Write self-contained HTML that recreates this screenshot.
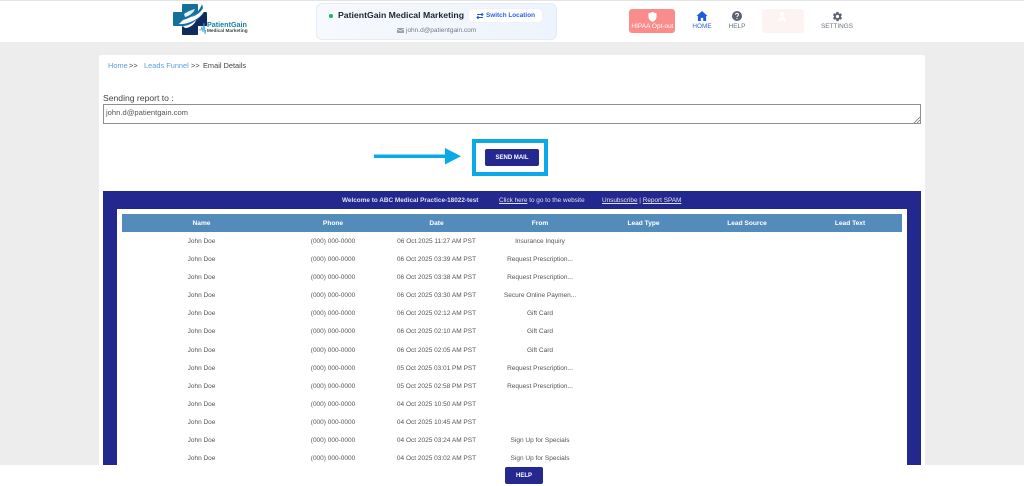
<!DOCTYPE html>
<html><head><meta charset="utf-8"><style>
*{box-sizing:border-box}
html,body{margin:0;padding:0}
body{width:1024px;height:486px;overflow:hidden;position:relative;background:#ededed;font-family:"Liberation Sans",Arial,sans-serif;color:#444}
.a{position:absolute;white-space:nowrap}
.c{transform:translateX(-50%)}
.cell{position:absolute;transform:translateX(-50%);font-size:6.5px;line-height:10px;margin-top:1px;color:#555;white-space:nowrap}
.th{position:absolute;transform:translateX(-50%);font-size:6.6px;line-height:10px;font-weight:bold;color:#fff;white-space:nowrap;top:219px}
</style></head><body>
<div class="a" style="left:0;top:0;width:1024px;height:42px;background:#fff;border-top:1px solid #e4e4e4"></div>

<svg class="a" style="left:170px;top:1px" width="82" height="38" viewBox="0 0 82 38">
<defs><clipPath id="cr"><path d="M12 4Q12 3 13 3H27Q28 3 28 4V11H36Q37 11 37 12V24Q37 25 36 25H28V33Q28 34 27 34H13Q12 34 12 33V25H4Q3 25 3 24V12Q3 11 4 11H12Z"/></clipPath></defs>
<g clip-path="url(#cr)">
<rect width="40" height="38" fill="#15709c"/>
<path d="M36 8 40 38H2L5 27C16 28 30 20 36 8Z" fill="#102a5e"/>
</g>
<path d="M33 2C31 9 24 16 13 19L9 23C19 24 33 16 35 8Z" fill="#fff"/>
<path d="M32 3C30 9 26 13 21 16 26 15 31 11 33 7Z" fill="#0f6f9e"/>
<path d="M14 13C18 10 22 9 25 8 24 11 20 15 15 16Z" fill="#dff0f6"/>
<path d="M13 25C18 25 23 22 26 19 25 23 20 27 15 27Z" fill="#fff"/>
<path d="M29 29h2l1-3 1 5 1-9 1 11 .7-4" stroke="#3ba3c8" stroke-width=".8" fill="none"/>
</svg>
<div class="a" style="left:207px;top:20px;font-size:7.200px;line-height:10px;font-weight:bold;color:#1583ab">PatientGain</div>
<div class="a" style="left:207px;top:28px;font-size:4.700px;line-height:6px;font-weight:bold;color:#444">Medical Marketing</div>

<div class="a" style="left:316px;top:3px;width:241px;height:37px;background:linear-gradient(90deg,#f6f9fd,#eef4fd);border:1px solid #e6ecf5;border-radius:6px"></div>
<div class="a" style="left:329px;top:14px;width:4px;height:4px;border-radius:50%;background:#17b85c"></div>
<div class="a" style="left:338px;top:10px;font-size:8.700px;line-height:11px;font-weight:bold;color:#1d2433">PatientGain Medical Marketing</div>
<div class="a" style="left:468px;top:8px;width:75px;height:15px;background:#fff;border:1px solid #eef1f7;border-radius:5px"></div>
<svg class="a" style="left:476px;top:12px" width="8" height="8" viewBox="0 0 8 8"><path d="M1 2.500h6M5.500 1 7 2.500 5.500 4M7 5.500H1M2.500 4 1 5.500 2.500 7" stroke="#2457e6" stroke-width="1" fill="none"/></svg>
<div class="a" style="left:486px;top:11px;font-size:6.400px;line-height:9px;font-weight:bold;color:#2f5fe0">Switch Location</div>
<svg class="a" style="left:397px;top:28px" width="7" height="5" viewBox="0 0 7 5"><rect width="7" height="5" rx=".6" fill="#9ba1ab"/><path d="M0 1l3.500 2L7 1" stroke="#fff" stroke-width=".6" fill="none"/></svg>
<div class="a" style="left:406px;top:26px;font-size:6.500px;line-height:9px;color:#737a86">john.d@patientgain.com</div>

<div class="a" style="left:629px;top:9px;width:46px;height:24px;background:#fa8c8c;border-radius:3px"></div>
<svg class="a" style="left:647.500px;top:11.500px" width="9" height="10" viewBox="0 0 10 11"><path d="M5 0 9.500 1.500V5c0 3-2 5-4.500 6C2.500 10 .5 8 .5 5V1.500z" fill="#fff"/></svg>
<div class="a c" style="left:652.500px;top:22px;font-size:6.500px;line-height:9px;color:#fff">HIPAA Opt-out</div>

<svg class="a" style="left:696px;top:11px" width="12" height="10" viewBox="0 0 12 11"><path d="M6 0 12 5.500H10.500V11H7.300V7.500H4.700V11H1.500V5.500H0z" fill="#1d5be0"/></svg>
<div class="a c" style="left:702px;top:23px;font-size:6.400px;line-height:8px;color:#2f63e0">HOME</div>

<svg class="a" style="left:732px;top:11px" width="10" height="10" viewBox="0 0 10 10"><circle cx="5" cy="5" r="5" fill="#596172"/><path d="M3.500 3.800C3.500 2.900 4.200 2.400 5 2.400s1.500.5 1.500 1.300C6.500 4.800 5 4.800 5 6" stroke="#fff" stroke-width="1" fill="none"/><circle cx="5" cy="7.500" r=".6" fill="#fff"/></svg>
<div class="a c" style="left:737px;top:23px;font-size:6.400px;line-height:8px;color:#6a7280">HELP</div>

<div class="a" style="left:762px;top:9px;width:42px;height:24px;background:#fef3f3;border-radius:3px"></div>
<svg class="a" style="left:777px;top:11px" width="12" height="10" viewBox="0 0 12 10"><circle cx="5" cy="3" r="2.400" fill="#fff"/><path d="M1 10c0-3 2-4 4-4s4 1 4 4z" fill="#fff"/></svg>

<svg class="a" style="left:832px;top:10.500px" width="11" height="11" viewBox="0 0 24 24"><path fill="#596172" d="M19.400 13c.1-.3.100-.7.100-1s0-.7-.1-1l2.100-1.600c.2-.2.200-.4.100-.6l-2-3.500c-.1-.2-.4-.3-.6-.2l-2.500 1c-.5-.4-1.100-.7-1.700-1l-.4-2.600c0-.3-.2-.5-.5-.5h-4c-.3 0-.5.200-.5.500l-.4 2.600c-.6.300-1.200.6-1.700 1l-2.500-1c-.2-.1-.5 0-.6.200l-2 3.500c-.1.200-.1.400.1.600L4.600 11c-.1.300-.1.700-.1 1s0 .7.100 1l-2.100 1.600c-.2.200-.2.400-.1.600l2 3.500c.1.200.4.300.6.200l2.500-1c.5.400 1.100.7 1.700 1l.4 2.600c0 .3.200.5.500.5h4c.3 0 .5-.2.500-.5l.4-2.600c.6-.3 1.200-.6 1.700-1l2.500 1c.2.100.5 0 .6-.2l2-3.500c.1-.2.100-.4-.1-.6zM12 15.500a3.500 3.500 0 1 1 0-7 3.500 3.500 0 0 1 0 7z"/></svg>
<div class="a c" style="left:837px;top:23px;font-size:6.400px;line-height:8px;color:#6a7280">SETTINGS</div>

<div class="a" style="left:99px;top:55px;width:826px;height:420px;background:#fff;border-radius:3px"></div>
<div class="a" style="left:108px;top:60px;font-size:7.400px;line-height:11px;color:#5a9fe0">Home</div>
<div class="a" style="left:129px;top:60px;font-size:7.400px;line-height:11px;color:#444">&gt;&gt;</div>
<div class="a" style="left:144px;top:60px;font-size:7.400px;line-height:11px;color:#5a9fe0">Leads Funnel</div>
<div class="a" style="left:191px;top:60px;font-size:7.400px;line-height:11px;color:#444">&gt;&gt;</div>
<div class="a" style="left:203px;top:60px;font-size:7.400px;line-height:11px;color:#444">Email Details</div>
<div class="a" style="left:103px;top:92px;font-size:8.600px;line-height:12px;color:#444">Sending report to :</div>
<div class="a" style="left:103px;top:104px;width:818px;height:20px;border:1px solid #8f8f8f;background:#fff;font-size:7.600px;line-height:15px;padding-left:2px;color:#555">john.d@patientgain.com</div>
<svg class="a" style="left:913px;top:116px" width="7" height="7" viewBox="0 0 7 7"><path d="M1 7 7 1M4 7 7 4" stroke="#777" stroke-width=".8"/></svg>

<svg class="a" style="left:374px;top:148px" width="88" height="17" viewBox="0 0 88 17"><rect y="6.500" width="72" height="3.500" fill="#0aa9e8"/><path d="M71 0 87 8.300 71 16.500z" fill="#0aa9e8"/></svg>
<div class="a" style="left:472px;top:139px;width:76px;height:37px;border:4px solid #0aa9e8"></div>
<div class="a" style="left:485px;top:149px;width:54px;height:17px;background:#24288f;border-radius:2px;color:#fff;font-size:6px;font-weight:bold;line-height:18px;text-align:center">SEND MAIL</div>

<div class="a" style="left:103px;top:191px;width:818px;height:274px;background:#23288f"></div>
<div class="a" style="left:342px;top:196px;font-size:6.400px;line-height:9px;font-weight:bold;color:#dfe1f0">Welcome to ABC Medical Practice-18022-test</div>
<div class="a" style="left:499px;top:196px;font-size:6.400px;line-height:9px;color:#dfe1f0"><u>Click here</u> to go to the website</div>
<div class="a" style="left:602px;top:196px;font-size:6.400px;line-height:9px;color:#dfe1f0"><u>Unsubscribe</u> | <u>Report SPAM</u></div>
<div class="a" style="left:117px;top:209px;width:790px;height:256px;background:#fff"></div>
<div class="a" style="left:122px;top:214px;width:780px;height:18px;background:#538cba"></div>
<div class="th" style="left:201.500px">Name</div><div class="th" style="left:333px">Phone</div><div class="th" style="left:436.500px">Date</div><div class="th" style="left:540px">From</div><div class="th" style="left:643.500px">Lead Type</div><div class="th" style="left:747px">Lead Source</div><div class="th" style="left:850px">Lead Text</div>

<div class="cell" style="left:201.500px;top:236px">John Doe</div><div class="cell" style="left:333px;top:236px">(000) 000-0000</div><div class="cell" style="left:436.500px;top:236px">06 Oct 2025 11:27 AM PST</div><div class="cell" style="left:540px;top:236px">Insurance Inquiry</div>
<div class="cell" style="left:201.500px;top:254px">John Doe</div><div class="cell" style="left:333px;top:254px">(000) 000-0000</div><div class="cell" style="left:436.500px;top:254px">06 Oct 2025 03:39 AM PST</div><div class="cell" style="left:540px;top:254px">Request Prescription...</div>
<div class="cell" style="left:201.500px;top:272px">John Doe</div><div class="cell" style="left:333px;top:272px">(000) 000-0000</div><div class="cell" style="left:436.500px;top:272px">06 Oct 2025 03:38 AM PST</div><div class="cell" style="left:540px;top:272px">Request Prescription...</div>
<div class="cell" style="left:201.500px;top:290px">John Doe</div><div class="cell" style="left:333px;top:290px">(000) 000-0000</div><div class="cell" style="left:436.500px;top:290px">06 Oct 2025 03:30 AM PST</div><div class="cell" style="left:540px;top:290px">Secure Online Paymen...</div>
<div class="cell" style="left:201.500px;top:308px">John Doe</div><div class="cell" style="left:333px;top:308px">(000) 000-0000</div><div class="cell" style="left:436.500px;top:308px">06 Oct 2025 02:12 AM PST</div><div class="cell" style="left:540px;top:308px">Gift Card</div>
<div class="cell" style="left:201.500px;top:326px">John Doe</div><div class="cell" style="left:333px;top:326px">(000) 000-0000</div><div class="cell" style="left:436.500px;top:326px">06 Oct 2025 02:10 AM PST</div><div class="cell" style="left:540px;top:326px">Gift Card</div>
<div class="cell" style="left:201.500px;top:345px">John Doe</div><div class="cell" style="left:333px;top:345px">(000) 000-0000</div><div class="cell" style="left:436.500px;top:345px">06 Oct 2025 02:05 AM PST</div><div class="cell" style="left:540px;top:345px">Gift Card</div>
<div class="cell" style="left:201.500px;top:363px">John Doe</div><div class="cell" style="left:333px;top:363px">(000) 000-0000</div><div class="cell" style="left:436.500px;top:363px">05 Oct 2025 03:01 PM PST</div><div class="cell" style="left:540px;top:363px">Request Prescription...</div>
<div class="cell" style="left:201.500px;top:381px">John Doe</div><div class="cell" style="left:333px;top:381px">(000) 000-0000</div><div class="cell" style="left:436.500px;top:381px">05 Oct 2025 02:58 PM PST</div><div class="cell" style="left:540px;top:381px">Request Prescription...</div>
<div class="cell" style="left:201.500px;top:399px">John Doe</div><div class="cell" style="left:333px;top:399px">(000) 000-0000</div><div class="cell" style="left:436.500px;top:399px">04 Oct 2025 10:50 AM PST</div>
<div class="cell" style="left:201.500px;top:417px">John Doe</div><div class="cell" style="left:333px;top:417px">(000) 000-0000</div><div class="cell" style="left:436.500px;top:417px">04 Oct 2025 10:45 AM PST</div>
<div class="cell" style="left:201.500px;top:435px">John Doe</div><div class="cell" style="left:333px;top:435px">(000) 000-0000</div><div class="cell" style="left:436.500px;top:435px">04 Oct 2025 03:24 AM PST</div><div class="cell" style="left:540px;top:435px">Sign Up for Specials</div>
<div class="cell" style="left:201.500px;top:453px">John Doe</div><div class="cell" style="left:333px;top:453px">(000) 000-0000</div><div class="cell" style="left:436.500px;top:453px">04 Oct 2025 03:02 AM PST</div><div class="cell" style="left:540px;top:453px">Sign Up for Specials</div>

<div class="a" style="left:0;top:465px;width:1024px;height:21px;background:#fff"></div>
<div class="a" style="left:505px;top:467px;width:38px;height:17px;background:#24288f;border-radius:2px;color:#fff;font-size:6px;font-weight:bold;line-height:18px;text-align:center">HELP</div>
</body></html>
